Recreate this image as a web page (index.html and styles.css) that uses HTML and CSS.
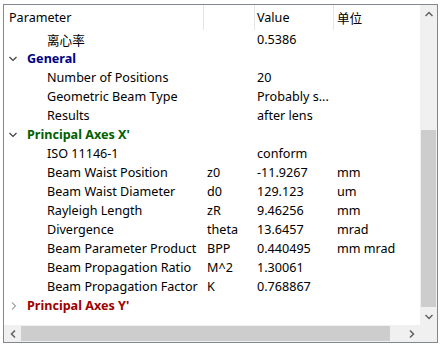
FILE: index.html
```html
<!DOCTYPE html>
<html lang="en">
<head>
  <meta charset="UTF-8">
  <title>Beam Parameters</title>
  <link rel="stylesheet" href="styles.css">
</head>
<body>
  <div class="frame">
    <div class="view">
      <div class="row header">
        <div class="cell c-param">Parameter</div>
        <div class="cell c-sym"></div>
        <div class="cell c-val">Value</div>
        <div class="cell c-unit">单位</div>
      </div>

      <div class="row">
        <div class="cell c-param child">离心率</div>
        <div class="cell c-sym"></div>
        <div class="cell c-val">0.5386</div>
        <div class="cell c-unit"></div>
      </div>

      <div class="row group">
        <div class="cell c-param">
          <svg class="arrow" width="8" height="6" viewBox="0 0 8 6"><polyline points="0.5,1 4,4.5 7.5,1" /></svg>
          <span class="group-name general">General</span>
        </div>
      </div>
      <div class="row">
        <div class="cell c-param child">Number of Positions</div>
        <div class="cell c-sym"></div>
        <div class="cell c-val">20</div>
        <div class="cell c-unit"></div>
      </div>
      <div class="row">
        <div class="cell c-param child">Geometric Beam Type</div>
        <div class="cell c-sym"></div>
        <div class="cell c-val">Probably s...</div>
        <div class="cell c-unit"></div>
      </div>
      <div class="row">
        <div class="cell c-param child">Results</div>
        <div class="cell c-sym"></div>
        <div class="cell c-val">after lens</div>
        <div class="cell c-unit"></div>
      </div>

      <div class="row group">
        <div class="cell c-param">
          <svg class="arrow" width="8" height="6" viewBox="0 0 8 6"><polyline points="0.5,1 4,4.5 7.5,1" /></svg>
          <span class="group-name axes-x">Principal Axes X'</span>
        </div>
      </div>
      <div class="row">
        <div class="cell c-param child">ISO 11146-1</div>
        <div class="cell c-sym"></div>
        <div class="cell c-val">conform</div>
        <div class="cell c-unit"></div>
      </div>
      <div class="row">
        <div class="cell c-param child">Beam Waist Position</div>
        <div class="cell c-sym">z0</div>
        <div class="cell c-val">-11.9267</div>
        <div class="cell c-unit">mm</div>
      </div>
      <div class="row">
        <div class="cell c-param child">Beam Waist Diameter</div>
        <div class="cell c-sym">d0</div>
        <div class="cell c-val">129.123</div>
        <div class="cell c-unit">um</div>
      </div>
      <div class="row">
        <div class="cell c-param child">Rayleigh Length</div>
        <div class="cell c-sym">zR</div>
        <div class="cell c-val">9.46256</div>
        <div class="cell c-unit">mm</div>
      </div>
      <div class="row">
        <div class="cell c-param child">Divergence</div>
        <div class="cell c-sym">theta</div>
        <div class="cell c-val">13.6457</div>
        <div class="cell c-unit">mrad</div>
      </div>
      <div class="row">
        <div class="cell c-param child">Beam Parameter Product</div>
        <div class="cell c-sym">BPP</div>
        <div class="cell c-val">0.440495</div>
        <div class="cell c-unit">mm mrad</div>
      </div>
      <div class="row">
        <div class="cell c-param child">Beam Propagation Ratio</div>
        <div class="cell c-sym">M^2</div>
        <div class="cell c-val">1.30061</div>
        <div class="cell c-unit"></div>
      </div>
      <div class="row">
        <div class="cell c-param child">Beam Propagation Factor</div>
        <div class="cell c-sym">K</div>
        <div class="cell c-val">0.768867</div>
        <div class="cell c-unit"></div>
      </div>

      <div class="row group">
        <div class="cell c-param">
          <svg class="arrow collapsed" width="8" height="8" viewBox="0 0 8 8"><polyline points="2,0.5 5.5,4 2,7.5" /></svg>
          <span class="group-name axes-y">Principal Axes Y'</span>
        </div>
      </div>
    </div>

    <div class="vscroll">
      <div class="sb-btn">
        <svg width="8" height="6" viewBox="0 0 8 6"><polyline points="0.5,5 4,1.5 7.5,5" /></svg>
      </div>
      <div class="vtrack">
        <div class="vthumb"></div>
      </div>
      <div class="sb-btn">
        <svg width="8" height="6" viewBox="0 0 8 6"><polyline points="0.5,1 4,4.5 7.5,1" /></svg>
      </div>
    </div>

    <div class="hscroll">
      <div class="sb-btn">
        <svg width="6" height="8" viewBox="0 0 6 8"><polyline points="5,0.5 1.5,4 5,7.5" /></svg>
      </div>
      <div class="htrack">
        <div class="hthumb"></div>
      </div>
      <div class="sb-btn">
        <svg width="6" height="8" viewBox="0 0 6 8"><polyline points="1,0.5 4.5,4 1,7.5" /></svg>
      </div>
    </div>

    <div class="corner"></div>
  </div>
</body>
</html>
```

FILE: styles.css
```css
body {
  margin: 0;
  padding: 4px 0 0 3px;
  background-color: #fff;
  font-family: "Noto Sans", "Noto Sans CJK SC", sans-serif;
  font-size: 12.6px;
  color: #000;
}

.frame {
  width: 433px;
  height: 337px;
  border: 1px solid #828790;
  display: grid;
  grid-template-columns: 416px 17px;
  grid-template-rows: 320px 17px;
  background-color: #fff;
}

.view {
  overflow: hidden;
}

.row {
  display: flex;
  height: 19px;
  align-items: center;
  white-space: nowrap;
}

.header {
  height: 25px;
}

.header .cell {
  height: 100%;
  display: flex;
  align-items: center;
  border-right: 1px solid #e5e5e5;
}

.cell {
  box-sizing: border-box;
  flex: none;
}

.c-param {
  width: 200px;
  padding-left: 5px;
  display: flex;
  align-items: center;
}

.c-sym {
  width: 51px;
  padding-left: 3px;
}

.c-val {
  width: 79px;
  padding-left: 2px;
}

.c-unit {
  width: 86px;
  padding-left: 3px;
}

.header .c-unit {
  border-right: none;
}

.child {
  padding-left: 43px;
}

.arrow {
  fill: none;
  stroke: #404040;
  stroke-width: 1.2;
  margin-left: 0;
  margin-right: 10px;
}

.arrow.collapsed {
  stroke: #a6a6a6;
  margin-left: 1px;
  margin-right: 9px;
}

.group-name {
  font-weight: bold;
}

.general {
  color: #000080;
}

.axes-x {
  color: #006000;
}

.axes-y {
  color: #a00000;
}

/* scrollbars */
.vscroll,
.hscroll,
.corner {
  background-color: #f0f0f0;
}

.vscroll {
  display: flex;
  flex-direction: column;
}

.hscroll {
  display: flex;
}

.sb-btn {
  width: 17px;
  height: 17px;
  flex: none;
  display: flex;
  align-items: center;
  justify-content: center;
}

.sb-btn svg {
  fill: none;
  stroke: #606060;
  stroke-width: 1.5;
}

.vtrack {
  flex: 1;
  display: flex;
  flex-direction: column;
}

.vthumb {
  margin: 108px 1px 0 1px;
  height: 177px;
  background-color: #cdcdcd;
}

.htrack {
  flex: 1;
  display: flex;
  align-items: center;
}

.hthumb {
  margin-left: 0;
  width: 369px;
  height: 15px;
  background-color: #cdcdcd;
}
```
